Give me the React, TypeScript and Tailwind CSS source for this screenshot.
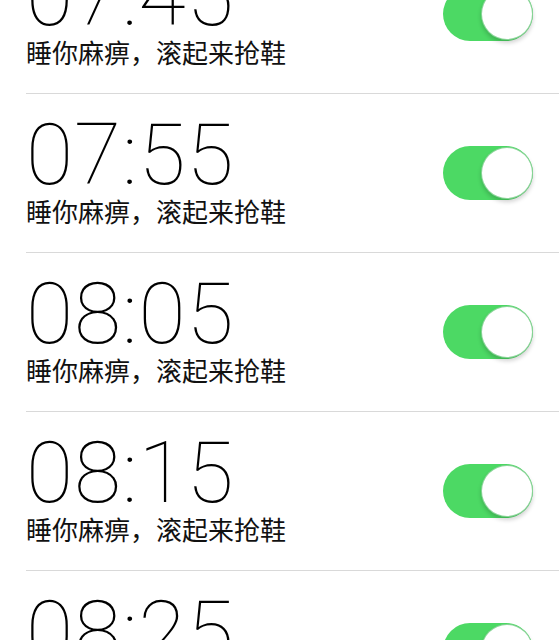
const alarms = ['07:45', '07:55', '08:05', '08:15', '08:25'];

const Toggle = () => (
  <div className="relative h-[54px] w-[90px] shrink-0 rounded-full bg-[#4cd964]">
    <div className="absolute right-0 top-[1px] h-[52px] w-[52px] rounded-full border border-[#3fb956]/60 bg-white shadow-[0_3px_4px_rgba(0,0,0,0.18)]" />
  </div>
);

const AlarmRow = ({ time }: { time: string }) => (
  <div className="ml-[26px] flex h-[159px] items-center justify-between border-b border-[#d9d9d9] pr-[26px]">
    <div className="flex flex-col pb-[10px]">
      <span className="font-['Roboto','Inter',sans-serif] text-[86px] font-thin leading-none tracking-[1px] text-black">
        {time}
      </span>
      <span className="font-['Noto_Sans_CJK_SC',sans-serif] text-[26px] leading-none text-[#111]">
        睡你麻痹，滚起来抢鞋
      </span>
    </div>
    <Toggle />
  </div>
);

export default function App() {
  return (
    <div className="h-[640px] w-[559px] overflow-hidden bg-white">
      <div className="-mt-[65px]">
        {alarms.map((t) => (
          <AlarmRow key={t} time={t} />
        ))}
      </div>
    </div>
  );
}
